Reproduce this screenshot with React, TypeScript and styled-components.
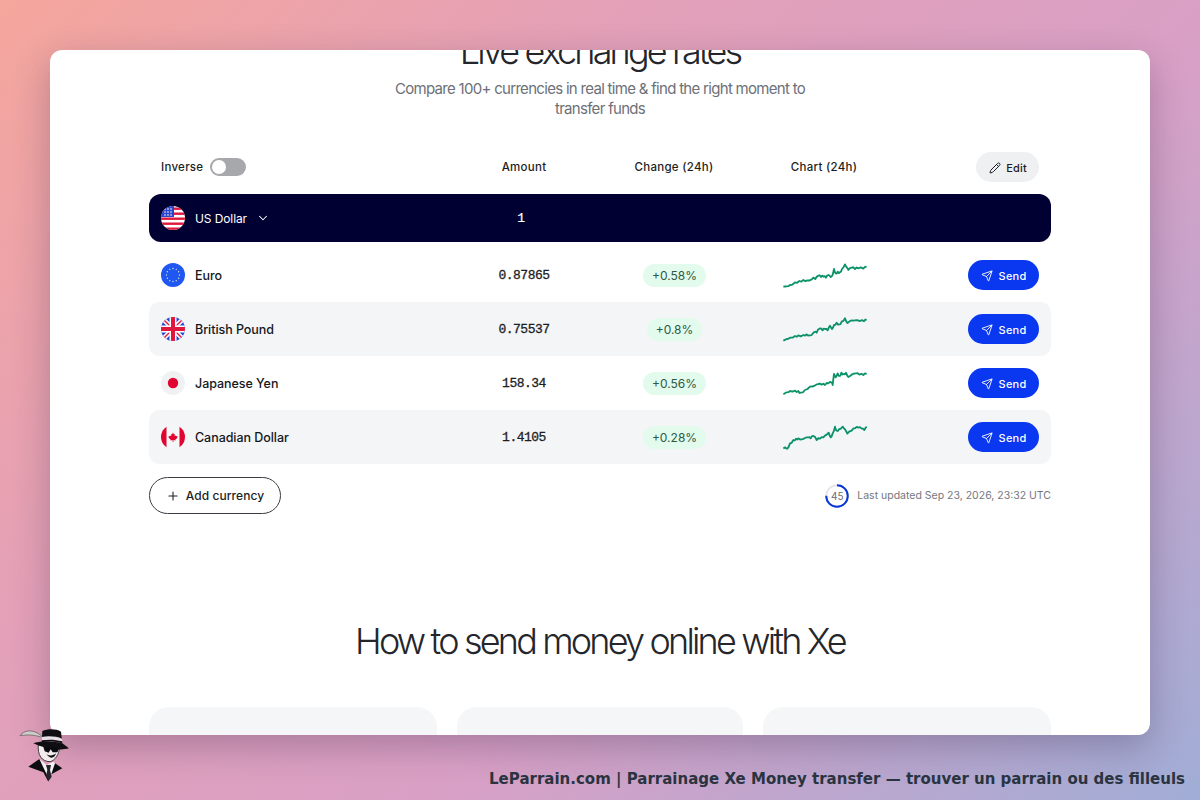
import React from "react";
import styled, { createGlobalStyle } from "styled-components";
import { Pencil, Send, Plus, ChevronDown } from "lucide-react";

const Global = createGlobalStyle`
  html, body { margin: 0; padding: 0; height: 100%; }
  body { font-family: Inter, "Liberation Sans", sans-serif; color: #15171c; }
`;

const Stage = styled.div`
  position: relative;
  width: 1200px;
  height: 800px;
  overflow: hidden;
  padding: 50px 50px 0;
  box-sizing: border-box;
  background: linear-gradient(135deg, #f5a69c 0%, #e3a0b8 32%, #d9a0c6 62%, #a0add6 100%);
`;

const Card = styled.main`
  width: 1100px;
  height: 685px;
  overflow: hidden;
  background: #fff;
  border-radius: 12px;
  box-shadow: 0 12px 36px rgba(40, 30, 60, 0.28);
  display: flex;
  flex-direction: column;
  align-items: center;
`;

const Title = styled.h1`
  margin: -21px 0 0;
  font-size: 36px;
  line-height: 44px;
  font-weight: 300;
  letter-spacing: -2.87px;
  color: #24262b;
  white-space: nowrap;
`;

const Subtitle = styled.p`
  margin: 6px 0 0;
  width: 440px;
  text-align: center;
  font-size: 15px;
  line-height: 20px;
  font-weight: 400;
  letter-spacing: -0.7px;
  color: #6c7078;
`;

const Table = styled.section`
  width: 902px;
  margin-top: 33px;
  display: flex;
  flex-direction: column;
`;

const cols = `288px 150px 150px 150px 1fr`;

const HeadRow = styled.div`
  display: grid;
  grid-template-columns: ${cols};
  align-items: center;
  height: 30px;
  padding: 0 12px;
  font-size: 11.5px;
  font-weight: 500;
  letter-spacing: 0.28px;
  color: #1c1e24;
`;

const InverseWrap = styled.div`
  display: flex;
  align-items: center;
  gap: 7px;
`;

const Toggle = styled.span`
  width: 36px;
  height: 18px;
  border-radius: 9px;
  background: #a7a8ac;
  display: flex;
  align-items: center;
  padding-left: 2px;
  box-sizing: border-box;
`;

const Knob = styled.span`
  width: 14px;
  height: 14px;
  border-radius: 50%;
  background: #fff;
`;

const HeadCell = styled.div`
  text-align: center;
`;

const EndCell = styled.div`
  display: flex;
  justify-content: flex-end;
`;

const EditButton = styled.button`
  width: 63px;
  height: 30px;
  border: 0;
  border-radius: 15px;
  background: #eff0f2;
  display: flex;
  align-items: center;
  justify-content: center;
  gap: 5px;
  font: 500 11px Inter, sans-serif;
  letter-spacing: 0.2px;
  color: #1c1e24;
  padding: 1px 0 0 1px;
`;

const BaseRow = styled.div`
  display: grid;
  grid-template-columns: ${cols};
  align-items: center;
  height: 48px;
  margin-top: 12px;
  margin-bottom: 6px;
  padding: 0 12px;
  border-radius: 12px;
  background: #000033;
  color: #fff;
`;

const Row = styled.div<{ $shade?: boolean }>`
  display: grid;
  grid-template-columns: ${cols};
  align-items: center;
  height: 54px;
  padding: 0 12px;
  border-radius: 10px;
  background: ${(p) => (p.$shade ? "#f4f5f7" : "#fff")};
`;

const NameCell = styled.div`
  display: flex;
  align-items: center;
  gap: 10px;
  font-size: 12.5px;
  font-weight: 500;
  letter-spacing: -0.05px;
`;

const BaseName = styled(NameCell)`
  font-size: 12px;
  font-weight: 400;
  letter-spacing: -0.1px;
`;

const Caret = styled(ChevronDown)`
  margin-left: -1px;
`;

const Flag = styled.svg`
  width: 24px;
  height: 24px;
  flex: none;
`;

const Amount = styled.div`
  text-align: center;
  font-family: "Liberation Mono", monospace;
  font-size: 13px;
  font-weight: 400;
  -webkit-text-stroke: 0.3px #1c1e24;
  letter-spacing: -0.5px;
  color: #1c1e24;
`;

const BaseAmount = styled(Amount)`
  padding-right: 6px;
  color: #fff;
  -webkit-text-stroke: 0.2px #fff;
`;

const PillCell = styled.div`
  display: flex;
  justify-content: center;
  padding-left: 1px;
`;

const Pill = styled.span`
  height: 23px;
  padding: 0 9px;
  border-radius: 12px;
  background: #e3fbec;
  color: #2b5a48;
  display: flex;
  align-items: center;
  font-size: 12px;
`;

const ChartCell = styled.div`
  display: flex;
  justify-content: center;
  padding-left: 2px;
`;

const Spark = styled.svg`
  width: 84px;
  height: 30px;
`;

const SendButton = styled.button`
  width: 71px;
  height: 30px;
  border: 0;
  border-radius: 15px;
  background: #0a37f0;
  color: #fff;
  padding: 1px 0 0;
  display: flex;
  align-items: center;
  justify-content: center;
  gap: 6px;
  font: 500 11px Inter, sans-serif;
  letter-spacing: 0.2px;
`;

const Footer = styled.div`
  display: flex;
  align-items: center;
  justify-content: space-between;
  margin-top: 13px;
`;

const AddButton = styled.button`
  width: 132px;
  height: 37px;
  border: 1px solid #3a3c42;
  border-radius: 19px;
  background: #fff;
  display: flex;
  align-items: center;
  justify-content: center;
  gap: 6px;
  font: 500 12px Inter, sans-serif;
  letter-spacing: 0.05px;
  color: #1c1e24;
  padding: 0;
`;

const Updated = styled.div`
  display: flex;
  align-items: center;
  gap: 8px;
  font-size: 10.5px;
  color: #74777e;
`;

const Timer = styled.div`
  position: relative;
  width: 24px;
  height: 24px;
  display: flex;
  align-items: center;
  justify-content: center;
  font-size: 10px;
  color: #6a6d74;
`;

const TimerRing = styled.svg`
  position: absolute;
  inset: 0;
`;

const Heading = styled.h2`
  margin: 105px 0 0;
  font-size: 36px;
  line-height: 44px;
  font-weight: 300;
  letter-spacing: -2.83px;
  color: #24262b;
  white-space: nowrap;
`;

const Steps = styled.div`
  margin-top: 44px;
  width: 902px;
  display: grid;
  grid-template-columns: 288px 286px 288px;
  justify-content: space-between;
  flex: none;
`;

const StepCard = styled.div`
  height: 120px;
  border-radius: 20px;
  background: #f4f6f7;
`;

const Caption = styled.div`
  position: absolute;
  right: 15px;
  bottom: 12px;
  font-family: "DejaVu Sans", sans-serif;
  font-weight: 700;
  font-size: 15px;
  line-height: 18px;
  color: #2a3340;
  white-space: nowrap;
`;

const Mascot = styled.svg`
  position: absolute;
  left: 0;
  top: 715px;
  width: 100px;
  height: 85px;
`;

const FlagClip = ({ children }: { children: React.ReactNode }) => (
  <Flag viewBox="0 0 24 24">
    <defs>
      <clipPath id="flagc">
        <circle cx="12" cy="12" r="12" />
      </clipPath>
    </defs>
    <g clipPath="url(#flagc)">{children}</g>
  </Flag>
);

const UsFlag = () => (
  <FlagClip>
    <rect width="24" height="24" fill="#fff" />
    {[0, 5, 10, 15, 20].map((y) => (
      <rect key={y} y={y + 1.5} width="24" height="2.4" fill="#e0173c" />
    ))}
    <rect width="13" height="11" fill="#2b45c8" />
    {[3, 6, 9].map((y) =>
      [4, 7, 10].map((x) => <circle key={`${x}${y}`} cx={x} cy={y} r="0.8" fill="#fff" />)
    )}
  </FlagClip>
);

const EuFlag = () => (
  <FlagClip>
    <rect width="24" height="24" fill="#1f57f2" />
    {Array.from({ length: 12 }).map((_, i) => {
      const a = (i * Math.PI) / 6;
      return <circle key={i} cx={12 + 6.5 * Math.cos(a)} cy={12 + 6.5 * Math.sin(a)} r="0.7" fill="#dfe2c0" />;
    })}
  </FlagClip>
);

const UkFlag = () => (
  <FlagClip>
    <rect width="24" height="24" fill="#2a4ad0" />
    <path d="M0 0L24 24M24 0L0 24" stroke="#fff" strokeWidth="4.5" />
    <path d="M0 0L24 24M24 0L0 24" stroke="#e0173c" strokeWidth="1.4" />
    <rect x="8.5" width="7" height="24" fill="#fff" />
    <rect y="8.5" width="24" height="7" fill="#fff" />
    <rect x="10" width="4" height="24" fill="#e0173c" />
    <rect y="10" width="24" height="4" fill="#e0173c" />
  </FlagClip>
);

const JpFlag = () => (
  <FlagClip>
    <rect width="24" height="24" fill="#f0f1f2" />
    <circle cx="12" cy="12" r="5.2" fill="#e0062f" />
  </FlagClip>
);

const CaFlag = () => (
  <FlagClip>
    <rect width="24" height="24" fill="#f5f6f7" />
    <rect width="5.5" height="24" fill="#e0062f" />
    <rect x="18.5" width="5.5" height="24" fill="#e0062f" />
    <path
      d="M12 7.6l1 1.9 1-.5-.4 2.3 1.2-.9.4.9 1.3-.2-.4 1.4.5.3-2.2 1.8.2.8-2.2-.3v1.9h-.8v-1.9l-2.2.3.2-.8-2.2-1.8.5-.3-.4-1.4 1.3.2.4-.9 1.2.9-.4-2.3 1 .5z"
      fill="#e0062f"
    />
  </FlagClip>
);

const jitter = (points: number[][]) =>
  points.flatMap(([x, y], i) => {
    const next = points[i + 1];
    if (!next) return [[x, y]];
    const wobble = Math.sin(i * 12.9898) * 3.5;
    return [
      [x, y],
      [(x + next[0]) / 2, (y + next[1]) / 2 + wobble],
    ];
  });

const ChartLine = ({ points, dy }: { points: number[][]; dy: number }) => (
  <Spark viewBox="39 15 252 90">
    <polyline
      points={jitter(points)
        .map(([x, y]) => `${x},${y - dy}`)
        .join(" ")}
      fill="none"
      stroke="#0c9268"
      strokeWidth="5.5"
      strokeLinejoin="round"
    />
  </Spark>
);

const charts = {
  eur: [[40,95],[50,94],[60,90],[75,82],[88,78],[100,75],[112,76],[125,73],[130,68],[136,72],[145,62],[153,66],[160,65],[168,68],[175,60],[182,66],[187,62],[192,42],[197,55],[203,50],[210,52],[216,42],[225,28],[231,38],[235,45],[245,38],[255,42],[265,40],[280,41],[290,35]],
  gbp: [[40,257],[50,252],[60,248],[75,243],[85,241],[100,240],[110,238],[118,241],[125,240],[133,231],[140,233],[148,221],[158,226],[165,222],[173,226],[180,212],[186,222],[192,210],[200,203],[208,208],[215,200],[225,190],[232,204],[240,198],[250,197],[270,198],[282,199],[290,195]],
  jpy: [[40,103],[50,97],[60,93],[75,92],[85,93],[92,98],[105,90],[120,80],[132,78],[145,72],[155,74],[165,75],[175,70],[185,68],[188,75],[192,42],[197,52],[203,40],[209,48],[214,38],[222,42],[228,38],[235,51],[245,44],[258,40],[268,44],[280,45],[290,42]],
  cad: [[40,265],[46,262],[52,266],[60,250],[70,240],[78,236],[85,235],[95,238],[105,234],[115,232],[122,235],[130,228],[140,240],[150,236],[160,232],[170,224],[176,218],[182,232],[188,220],[195,200],[200,212],[207,208],[218,200],[225,208],[232,221],[245,212],[255,205],[265,203],[275,206],[283,210],[290,200]],
};

const rows = [
  { name: "Euro", flag: <EuFlag />, amount: "0.87865", change: "+0.58%", pts: charts.eur, dy: 0 },
  { name: "British Pound", flag: <UkFlag />, amount: "0.75537", change: "+0.8%", pts: charts.gbp, dy: 162 },
  { name: "Japanese Yen", flag: <JpFlag />, amount: "158.34", change: "+0.56%", pts: charts.jpy, dy: 9 },
  { name: "Canadian Dollar", flag: <CaFlag />, amount: "1.4105", change: "+0.28%", pts: charts.cad, dy: 171 },
];

export default function App() {
  return (
    <Stage>
      <Global />
      <Card>
        <Title>Live exchange rates</Title>
        <Subtitle>Compare 100+ currencies in real time &amp; find the right moment to transfer funds</Subtitle>
        <Table>
          <HeadRow>
            <InverseWrap>
              Inverse
              <Toggle>
                <Knob />
              </Toggle>
            </InverseWrap>
            <HeadCell>Amount</HeadCell>
            <HeadCell>Change (24h)</HeadCell>
            <HeadCell>Chart (24h)</HeadCell>
            <EndCell>
              <EditButton>
                <Pencil size={12} strokeWidth={2} />
                Edit
              </EditButton>
            </EndCell>
          </HeadRow>
          <BaseRow>
            <BaseName>
              <UsFlag />
              US Dollar
              <Caret size={14} strokeWidth={1.8} />
            </BaseName>
            <BaseAmount>1</BaseAmount>
          </BaseRow>
          {rows.map((r, i) => (
            <Row key={r.name} $shade={i % 2 === 1}>
              <NameCell>
                {r.flag}
                {r.name}
              </NameCell>
              <Amount>{r.amount}</Amount>
              <PillCell>
                <Pill>{r.change}</Pill>
              </PillCell>
              <ChartCell>
                <ChartLine points={r.pts} dy={r.dy} />
              </ChartCell>
              <EndCell>
                <SendButton>
                  <Send size={12} strokeWidth={1.8} />
                  Send
                </SendButton>
              </EndCell>
            </Row>
          ))}
          <Footer>
            <AddButton>
              <Plus size={14} strokeWidth={1.8} />
              Add currency
            </AddButton>
            <Updated>
              <Timer>
                <TimerRing viewBox="0 0 24 24">
                  <circle cx="12" cy="12" r="10.75" fill="none" stroke="#e6e7ea" strokeWidth="2" />
                  <circle
                    cx="12"
                    cy="12"
                    r="10.75"
                    fill="none"
                    stroke="#0a37d8"
                    strokeWidth="2"
                    strokeDasharray="50.6 68"
                    transform="rotate(-90 12 12)"
                  />
                </TimerRing>
                45
              </Timer>
              Last updated Sep 23, 2026, 23:32 UTC
            </Updated>
          </Footer>
        </Table>
        <Heading>How to send money online with Xe</Heading>
        <Steps>
          <StepCard />
          <StepCard />
          <StepCard />
        </Steps>
      </Card>
      <Mascot viewBox="0 0 300 255">
        <path d="M60 62C75 42 105 42 130 68C105 60 85 58 60 62Z" fill="#cfcbc8" stroke="#555" strokeWidth="2" />
        <path d="M85 155L118 132L140 160L150 165L165 145L187 160L150 180L145 200L130 172Z" fill="#0d0c10" />
        <path d="M118 132L140 150L160 140L165 145L148 195Z" fill="#f3f0f0" />
        <path d="M138 150L153 150L150 165L155 185L146 198L138 183L142 165Z" fill="#26242c" />
        <path d="M115 88C112 120 125 140 150 140C165 138 178 115 178 100Z" fill="#f2ecec" stroke="#222" strokeWidth="2.5" />
        <path d="M127 48C145 40 170 42 183 50L187 85C165 78 145 78 125 82Z" fill="#0f0e13" />
        <path d="M125 66C145 62 170 64 186 71L187 79C165 73 145 73 125 76Z" fill="#e6e0e6" />
        <path d="M100 85C120 76 170 80 187 85L207 100C180 108 130 100 100 85Z" fill="#0f0e13" />
        <path d="M130 95L178 100L172 112L158 112L152 103L146 113L134 109Z" fill="#0b0a0e" />
        <path d="M140 118C150 124 160 122 168 115C165 130 150 134 140 118Z" fill="#111" />
      </Mascot>
      <Caption>LeParrain.com | Parrainage Xe Money transfer — trouver un parrain ou des filleuls</Caption>
    </Stage>
  );
}
